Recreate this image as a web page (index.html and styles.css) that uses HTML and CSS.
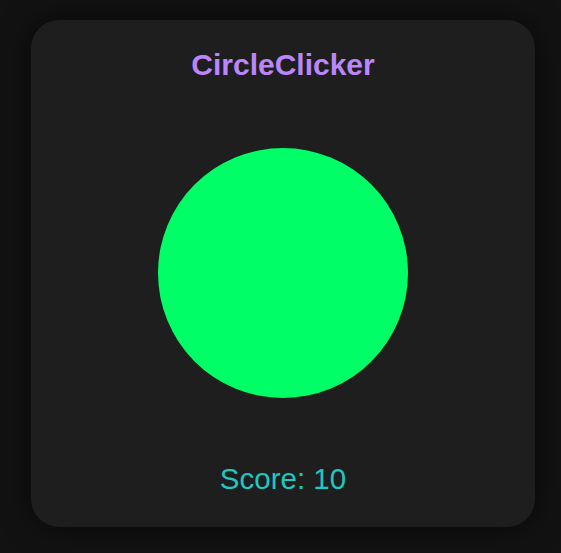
FILE: index.html
```html
<!DOCTYPE html>
<html lang="en">
<head>
<meta charset="utf-8">
<title>CircleClicker</title>
<link rel="stylesheet" href="styles.css">
</head>
<body>
  <main class="card">
    <h1 class="title">CircleClicker</h1>
    <div class="stage">
      <button class="circle" type="button" aria-label="Click the circle"></button>
    </div>
    <p class="score">Score: <span class="score-value">10</span></p>
  </main>
</body>
</html>
```
FILE: styles.css
```css
html, body {
  margin: 0;
  height: 100%;
}
body {
  background: #121212;
  font-family: "Liberation Sans", Arial, sans-serif;
  padding: 20px 0 0 31px;
  box-sizing: border-box;
}
.card {
  width: 504px;
  height: 507px;
  box-sizing: border-box;
  background: #1e1e1e;
  border-radius: 28px;
  box-shadow: 0 0 30px rgba(0, 0, 0, 0.6);
  display: flex;
  flex-direction: column;
  align-items: center;
  padding-top: 28px;
}
.title {
  margin: 0;
  font-size: 30px;
  font-weight: bold;
  line-height: normal;
  color: #bb86fc;
}
.stage {
  margin-top: 66px;
  display: flex;
  justify-content: center;
}
.circle {
  width: 250px;
  height: 250px;
  border-radius: 50%;
  background: #00ff66;
  border: none;
  padding: 0;
  cursor: pointer;
}
.score {
  margin: 64px 0 0;
  font-size: 29.5px;
  line-height: normal;
  color: #1ec8c0;
}
```
